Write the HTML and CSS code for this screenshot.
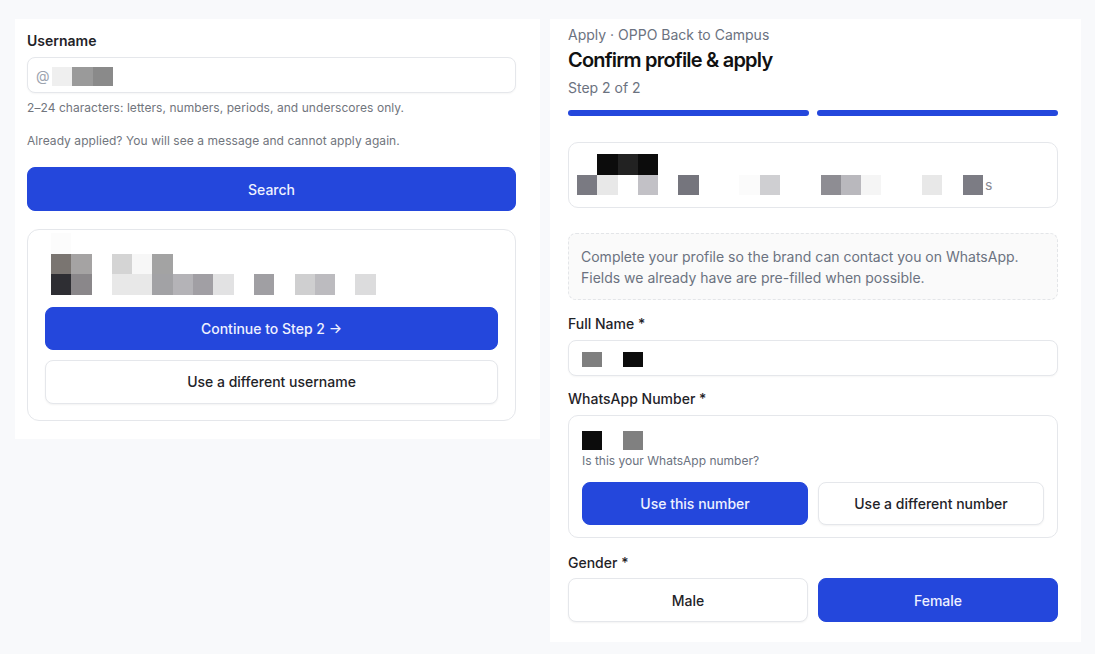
FILE: index.html
```html
<!DOCTYPE html>
<html lang="en">
<head>
<meta charset="utf-8">
<title>Apply</title>
<link rel="stylesheet" href="styles.css">
</head>
<body>
<div class="page">
  <section class="panel panel-left">
    <label class="label">Username</label>
    <div class="input">
      <span class="at">@</span>
      <span class="blk in-blk t-ef"></span><span class="blk in-blk t-9a"></span><span class="blk in-blk t-8a"></span>
    </div>
    <p class="hint hint-first">2–24 characters: letters, numbers, periods, and underscores only.</p>
    <p class="hint hint-second">Already applied? You will see a message and cannot apply again.</p>
    <button class="btn btn-primary btn-search">Search</button>

    <div class="result-card">
      <div class="mosaic mosaic-left">
        <div class="mrow"><span class="blk t-fc"></span></div>
        <div class="mrow"><span class="blk t-7a"></span><span class="blk t-a5"></span><span class="blk"></span><span class="blk t-d4"></span><span class="blk t-f7"></span><span class="blk t-a3"></span></div>
        <div class="mrow"><span class="blk t-2e"></span><span class="blk t-8a7"></span><span class="blk"></span><span class="blk t-e8"></span><span class="blk t-e8"></span><span class="blk t-a2"></span><span class="blk t-b4"></span><span class="blk t-a1"></span><span class="blk t-e2"></span><span class="blk"></span><span class="blk t-a0"></span><span class="blk"></span><span class="blk t-cf"></span><span class="blk t-bc"></span><span class="blk"></span><span class="blk t-dc"></span></div>
      </div>
      <button class="btn btn-primary btn-continue">Continue to Step 2 →</button>
      <button class="btn btn-outline btn-diff">Use a different username</button>
    </div>
  </section>

  <section class="panel panel-right">
    <p class="eyebrow">Apply · OPPO Back to Campus</p>
    <h1 class="title">Confirm profile &amp; apply</h1>
    <p class="step">Step 2 of 2</p>
    <div class="progress">
      <span class="bar"></span>
      <span class="bar"></span>
    </div>

    <div class="profile-card">
      <div class="mosaic">
        <div class="mrow"><span class="blk"></span><span class="blk t-0c"></span><span class="blk t-22"></span><span class="blk t-0c"></span></div>
        <div class="mrow"><span class="blk t-7a2"></span><span class="blk t-e8"></span><span class="blk"></span><span class="blk t-c2"></span><span class="blk"></span><span class="blk t-75"></span><span class="blk"></span><span class="blk"></span><span class="blk t-fb"></span><span class="blk t-cf2"></span><span class="blk"></span><span class="blk"></span><span class="blk t-8e"></span><span class="blk t-b9"></span><span class="blk t-f5"></span><span class="blk"></span><span class="blk"></span><span class="blk t-e8"></span><span class="blk"></span><span class="blk t-7c"></span><span class="tail">s</span></div>
      </div>
    </div>

    <div class="notice">
      Complete your profile so the brand can contact you on WhatsApp.<br>
      Fields we already have are pre-filled when possible.
    </div>

    <label class="label label-field">Full Name *</label>
    <div class="input input-name">
      <span class="blk name-blk t-7f"></span><span class="blk name-blk"></span><span class="blk name-blk t-0c"></span>
    </div>

    <label class="label label-wa">WhatsApp Number *</label>
    <div class="wa-box">
      <div class="wa-num"><span class="blk wa-blk t-0c"></span><span class="blk wa-blk"></span><span class="blk wa-blk t-80"></span></div>
      <p class="wa-q">Is this your WhatsApp number?</p>
      <div class="btn-row btn-row-wa">
        <button class="btn btn-primary">Use this number</button>
        <button class="btn btn-outline">Use a different number</button>
      </div>
    </div>

    <label class="label label-gender">Gender *</label>
    <div class="btn-row btn-row-gender">
      <button class="btn btn-outline">Male</button>
      <button class="btn btn-primary">Female</button>
    </div>
  </section>
</div>
</body>
</html>
```

FILE: styles.css
```css
* { box-sizing: border-box; }

html, body {
  margin: 0;
  background: #f8f9fb;
  font-family: Inter, "Liberation Sans", sans-serif;
  color: #111827;
}

.page {
  display: flex;
  align-items: flex-start;
  gap: 10px;
  padding: 19px 0 0 15px;
}

.panel {
  background: #ffffff;
  display: flex;
  flex-direction: column;
}

.panel-left {
  width: 525px;
  padding: 12px 24px 18px 12px;
}

.panel-right {
  width: 531px;
  padding: 6px 23px 20px 18px;
}

p { margin: 0; }

.label {
  display: block;
  font-size: 14px;
  line-height: 20px;
  font-weight: 600;
  color: #1f2328;
}

.input {
  margin-top: 6px;
  height: 36px;
  border: 1px solid #e5e7eb;
  border-radius: 8px;
  box-shadow: 0 1px 2px rgba(0, 0, 0, 0.04);
  display: flex;
  align-items: center;
  padding-left: 8px;
  background: #fff;
}

.at {
  font-size: 14px;
  color: #9ca3af;
  width: 16px;
}

.blk {
  display: block;
  width: 20.3px;
  height: 20.5px;
  flex: none;
}

.in-blk { height: 19px; margin-top: 3px; }

.hint {
  font-size: 12px;
  line-height: 16px;
  color: #71757d;
  letter-spacing: 0.005em;
}
.hint-first { margin-top: 7px; }
.hint-second { margin-top: 17px; }

.btn {
  font-family: Inter, "Liberation Sans", sans-serif;
  font-size: 14px;
  font-weight: 500;
  height: 44px;
  border-radius: 8px;
  cursor: pointer;
  display: flex;
  align-items: center;
  justify-content: center;
  padding: 0;
}

.btn-primary {
  background: #2447dc;
  border: 1px solid #2447dc;
  color: #eef1ff;
}

.btn-outline {
  background: #ffffff;
  border: 1px solid #e5e7eb;
  color: #1f2328;
  box-shadow: 0 1px 2px rgba(0, 0, 0, 0.05);
}

.btn-search { margin-top: 18px; width: 100%; }

.result-card {
  margin-top: 18px;
  border: 1px solid #e5e7eb;
  border-radius: 12px;
  padding: 4px 17px 16px;
  display: flex;
  flex-direction: column;
}

.mosaic-left { margin-left: 6px; margin-top: -1px; }

.mrow { display: flex; align-items: center; }

.btn-continue { margin-top: 12px; height: 43px; }
.btn-diff { margin-top: 10px; }

/* right */
.eyebrow {
  font-size: 14px;
  line-height: 20px;
  color: #6b7280;
}

.title {
  margin: 1px 0 0;
  font-size: 20px;
  line-height: 28px;
  font-weight: 600;
  letter-spacing: -0.04em;
  color: #111111;
}

.step {
  margin-top: 4px;
  font-size: 14px;
  line-height: 20px;
  color: #6b7280;
}

.progress {
  margin-top: 12px;
  display: flex;
  gap: 8px;
}
.bar {
  flex: 1;
  height: 6px;
  border-radius: 3px;
  background: #2447dc;
}

.profile-card {
  margin-top: 26px;
  border: 1px solid #e5e7eb;
  border-radius: 10px;
  padding: 11px 8px 12px;
}

.tail {
  font-size: 14px;
  color: #8b8b93;
  margin-left: 2px;
}

.notice {
  margin-top: 25px;
  border: 1px dashed #e3e5e8;
  background: #fafafa;
  border-radius: 8px;
  padding: 12px 12px 11px;
  font-size: 14px;
  line-height: 21px;
  color: #6b7280;
}

.label-field { margin-top: 14px; font-weight: 500; }
.input-name { margin-top: 6px; padding-left: 13px; }
.name-blk { height: 15px; margin-top: 2px; }

.label-wa { margin-top: 13px; font-weight: 500; }

.wa-box {
  margin-top: 6px;
  border: 1px solid #e5e7eb;
  border-radius: 10px;
  padding: 15px 13px 12px;
}
.wa-num { display: flex; }
.wa-blk { height: 19px; }
.wa-q {
  margin-top: 3px;
  font-size: 12px;
  line-height: 16px;
  color: #6b7280;
}

.btn-row {
  display: flex;
  gap: 10px;
}
.btn-row .btn { flex: 1; }
.btn-row-wa { margin-top: 13px; }
.btn-row-wa .btn { height: 43px; }

.label-gender { margin-top: 15px; font-weight: 500; }
.btn-row-gender { margin-top: 5px; }

/* mosaic shades */
.t-ef { background: #efefef; }
.t-9a { background: #9a9a9a; }
.t-8a { background: #8a8a8a; }
.t-fc { background: #fcfcfc; }
.t-7a { background: #7a7571; }
.t-a5 { background: #a5a3a3; }
.t-d4 { background: #d4d4d4; }
.t-f7 { background: #f7f7f7; }
.t-a3 { background: #a3a3a3; }
.t-2e { background: #2e2e33; }
.t-8a7 { background: #8a878a; }
.t-e8 { background: #e8e8e8; }
.t-a2 { background: #a2a2a5; }
.t-b4 { background: #b4b3b7; }
.t-a1 { background: #a19fa4; }
.t-e2 { background: #e2e2e3; }
.t-a0 { background: #a09fa3; }
.t-cf { background: #cfcfd0; }
.t-bc { background: #bcbbbf; }
.t-dc { background: #dcdcdd; }
.t-0c { background: #0c0c0c; }
.t-22 { background: #222222; }
.t-7a2 { background: #7a7a82; }
.t-c2 { background: #c2c1c6; }
.t-75 { background: #75757d; }
.t-fb { background: #fbfbfb; }
.t-cf2 { background: #cfcfd2; }
.t-8e { background: #8e8d93; }
.t-b9 { background: #b9b8bd; }
.t-f5 { background: #f5f5f5; }
.t-7c { background: #7c7c84; }
.t-7f { background: #7f7f7f; }
.t-80 { background: #808080; }
```
